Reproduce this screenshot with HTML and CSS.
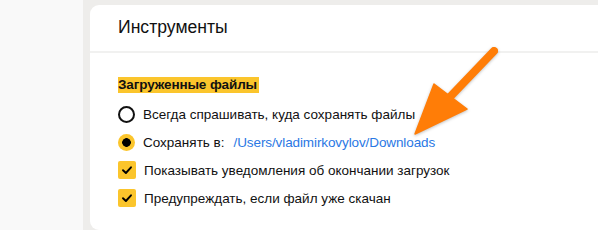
FILE: index.html
```
<!DOCTYPE html>
<html lang="ru">
<head>
<meta charset="utf-8">
<link rel="stylesheet" href="styles.css">
</head>
<body>
<div class="page">
  <aside class="sidebar"></aside>
  <main class="main">
    <section class="card">
      <header class="card-head"><h1 class="title">Инструменты</h1></header>
      <div class="card-body">
        <h2 class="section-title"><span class="mark">Загруженные файлы</span></h2>
        <ul class="options">
          <li class="option"><span class="radio"></span><span class="label">Всегда спрашивать, куда сохранять файлы</span></li>
          <li class="option"><span class="radio radio-on"></span><span class="label">Сохранять в:</span><a class="path">/Users/vladimirkovylov/Downloads</a></li>
          <li class="option"><span class="check"><svg viewBox="0 0 18 18" width="18" height="18"><path d="M5 9.2 L7.9 12 L13 6.3" fill="none" stroke="#000" stroke-width="1.9" stroke-linecap="round" stroke-linejoin="round"/></svg></span><span class="label">Показывать уведомления об окончании загрузок</span></li>
          <li class="option"><span class="check"><svg viewBox="0 0 18 18" width="18" height="18"><path d="M5 9.2 L7.9 12 L13 6.3" fill="none" stroke="#000" stroke-width="1.9" stroke-linecap="round" stroke-linejoin="round"/></svg></span><span class="label">Предупреждать, если файл уже скачан</span></li>
        </ul>
      </div>
    </section>
  </main>
</div>
<svg class="arrow" width="598" height="230" viewBox="0 0 598 230">
  <line x1="494" y1="51" x2="448" y2="99" stroke="#ff7d07" stroke-width="8" stroke-linecap="round"/>
  <polygon points="415,134 434,84 467,109" fill="#ff7d07" stroke="#ff7d07" stroke-width="1.5" stroke-linejoin="round"/>
</svg>
</body>
</html>
```
FILE: styles.css
```
html, body {
  margin: 0;
  padding: 0;
}
body {
  width: 598px;
  height: 230px;
  overflow: hidden;
  background: #f9f9f9;
  font-family: "Liberation Sans", Arial, sans-serif;
  color: #111;
  position: relative;
}
.page {
  display: flex;
  height: 230px;
}
.sidebar {
  width: 83px;
  flex: none;
  background: #f9f9f9;
}
.main {
  flex: 1;
  background: #eeedeb;
  padding: 5px 0 0 7px;
  display: flex;
}
.card {
  flex: 1;
  background: #fff;
  border-radius: 9px 0 0 9px;
  display: flex;
  flex-direction: column;
}
.card-head {
  height: 46px;
  border-bottom: 2px solid #f1f1f0;
  padding-left: 28px;
  display: flex;
  align-items: center;
}
.title {
  margin: 0;
  font-size: 17.6px;
  font-weight: 400;
  padding-bottom: 2px;
}
.card-body {
  padding: 24px 0 0 28px;
}
.section-title {
  margin: 0;
  font-size: 13.5px;
  font-weight: 700;
  letter-spacing: -0.12px;
  line-height: 16px;
  height: 16px;
}
.mark {
  background: #fbc52c;
  padding: 0 2px 0 0;
  display: inline-block;
  height: 16px;
}
.options {
  list-style: none;
  margin: 7px 0 0;
  padding: 0;
}
.option {
  display: flex;
  align-items: center;
  height: 28px;
  font-size: 13.5px;
}
.radio {
  width: 17px;
  height: 17px;
  box-sizing: border-box;
  border: 2px solid #111;
  border-radius: 50%;
  flex: none;
  margin-right: 8px;
}
.radio-on {
  border: none;
  background: radial-gradient(circle, #000 0 4px, #fbc52c 4.6px);
}
.check {
  width: 18px;
  height: 18px;
  border-radius: 2px;
  background: #fbc52c;
  flex: none;
  margin-right: 8px;
  display: flex;
}
.label {
  white-space: nowrap;
}
.path {
  color: #2a78e4;
  margin-left: 9px;
  letter-spacing: -0.1px;
  white-space: nowrap;
}
.arrow {
  position: absolute;
  left: 0;
  top: 0;
  pointer-events: none;
  filter: drop-shadow(0 1px 1.5px rgba(0,0,0,0.25));
}
```
